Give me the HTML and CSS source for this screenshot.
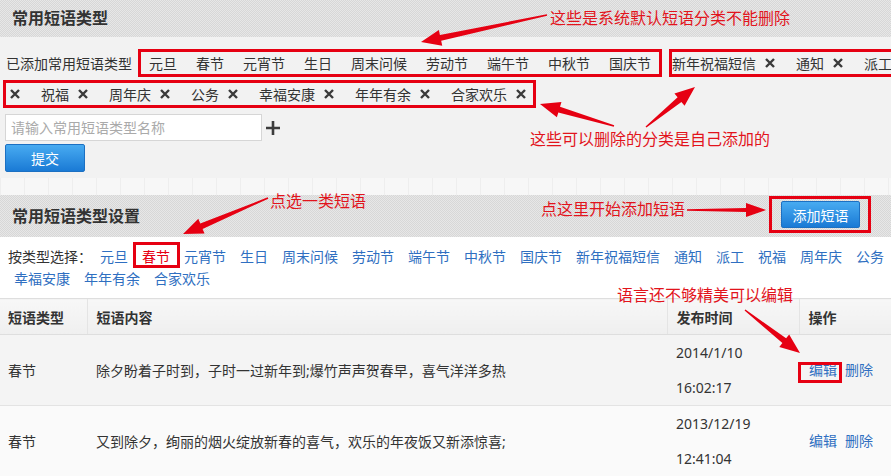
FILE: index.html
```html
<!DOCTYPE html>
<html lang="zh-CN">
<head>
    <meta charset="UTF-8">
    <meta name="viewport" content="width=device-width, initial-scale=1.0">
    <title>常用短语类型</title>
    <link rel="stylesheet" href="styles.css">
</head>
<body>
<div class="page">
    <!-- 常用短语类型 -->
    <div class="bar">
        <h2>常用短语类型</h2>
    </div>
    <div class="panel-body">
        <div class="tag-row">
            <span class="tag-label">已添加常用短语类型</span>
            <span class="tag-group system">
                <span>元旦</span>
                <span>春节</span>
                <span>元宵节</span>
                <span>生日</span>
                <span>周末问候</span>
                <span>劳动节</span>
                <span>端午节</span>
                <span>中秋节</span>
                <span>国庆节</span>
            </span>
            <span class="tag-group own first-line">
                <span class="tag">新年祝福短信<svg class="del" viewBox="0 0 10 10"><path d="M1 1L9 9M9 1L1 9"/></svg></span>
                <span class="tag">通知<svg class="del" viewBox="0 0 10 10"><path d="M1 1L9 9M9 1L1 9"/></svg></span>
                <span class="tag">派工</span>
            </span>
        </div>
        <div class="tag-row">
            <span class="tag-group own second-line">
                <span class="tag"><svg class="del" viewBox="0 0 10 10"><path d="M1 1L9 9M9 1L1 9"/></svg></span>
                <span class="tag">祝福<svg class="del" viewBox="0 0 10 10"><path d="M1 1L9 9M9 1L1 9"/></svg></span>
                <span class="tag">周年庆<svg class="del" viewBox="0 0 10 10"><path d="M1 1L9 9M9 1L1 9"/></svg></span>
                <span class="tag">公务<svg class="del" viewBox="0 0 10 10"><path d="M1 1L9 9M9 1L1 9"/></svg></span>
                <span class="tag">幸福安康<svg class="del" viewBox="0 0 10 10"><path d="M1 1L9 9M9 1L1 9"/></svg></span>
                <span class="tag">年年有余<svg class="del" viewBox="0 0 10 10"><path d="M1 1L9 9M9 1L1 9"/></svg></span>
                <span class="tag">合家欢乐<svg class="del" viewBox="0 0 10 10"><path d="M1 1L9 9M9 1L1 9"/></svg></span>
            </span>
        </div>
        <div class="add-row">
            <input type="text" placeholder="请输入常用短语类型名称">
            <svg class="plus" viewBox="0 0 14 14"><path d="M7 0V14M0 7H14"/></svg>
        </div>
        <button class="btn submit">提交</button>
    </div>

    <div class="band"></div>

    <!-- 常用短语类型设置 -->
    <div class="bar tall">
        <h2>常用短语类型设置</h2>
        <span class="btn-mark"><button class="btn add">添加短语</button></span>
    </div>
    <div class="filter">
        <span class="filter-label">按类型选择：</span>
        <a href="#">元旦</a>
        <a href="#" class="active">春节</a>
        <a href="#">元宵节</a>
        <a href="#">生日</a>
        <a href="#">周末问候</a>
        <a href="#">劳动节</a>
        <a href="#">端午节</a>
        <a href="#">中秋节</a>
        <a href="#">国庆节</a>
        <a href="#">新年祝福短信</a>
        <a href="#">通知</a>
        <a href="#">派工</a>
        <a href="#">祝福</a>
        <a href="#">周年庆</a>
        <a href="#">公务</a>
        <a href="#">幸福安康</a>
        <a href="#">年年有余</a>
        <a href="#">合家欢乐</a>
    </div>

    <table>
        <colgroup>
            <col style="width:87px">
            <col style="width:580px">
            <col style="width:132px">
            <col style="width:92px">
        </colgroup>
        <tr>
            <th>短语类型</th>
            <th>短语内容</th>
            <th>发布时间</th>
            <th>操作</th>
        </tr>
        <tr>
            <td>春节</td>
            <td>除夕盼着子时到，子时一过新年到;爆竹声声贺春早，喜气洋洋多热</td>
            <td class="time">2014/1/10<br>16:02:17</td>
            <td><div class="actions"><a href="#" class="marked">编辑</a><a href="#">删除</a></div></td>
        </tr>
        <tr>
            <td>春节</td>
            <td>又到除夕，绚丽的烟火绽放新春的喜气，欢乐的年夜饭又新添惊喜;</td>
            <td class="time">2013/12/19<br>12:41:04</td>
            <td><div class="actions"><a href="#">编辑</a><a href="#">删除</a></div></td>
        </tr>
    </table>

    <!-- annotations drawn over the screenshot -->
    <svg class="arrows" viewBox="0 0 891 476">
        <polygon points="546.85,14.32 439.92,34.88 438.87,29.99 421,42 442.23,45.63 441.18,40.74 547.15,15.68"/>
        <polygon points="614.2,125.33 560.03,106.82 561.45,102.03 540,104 556.89,117.37 558.32,112.58 613.8,126.67"/>
        <polygon points="646.44,127.54 681.41,101.97 684.57,105.85 695,87 674.45,93.45 677.61,97.33 645.56,126.46"/>
        <polygon points="267.73,197.36 200.25,223.44 198.3,218.83 183,234 204.54,233.57 202.59,228.96 268.27,198.64"/>
        <polygon points="687,209.3 746,208 746,203 766,210 746,217 746,212 687,210.7"/>
        <polygon points="744.57,310.55 782.39,343.04 779.31,346.98 800,353 789.17,334.38 786.09,338.32 745.43,309.45"/>
    </svg>
    <span class="note n1">这些是系统默认短语分类不能删除</span>
    <span class="note n2">这些可以删除的分类是自己添加的</span>
    <span class="note n3">点选一类短语</span>
    <span class="note n4">点这里开始添加短语</span>
    <span class="note n5">语言还不够精美可以编辑</span>
</div>
</body>
</html>
```

FILE: styles.css
```css
* {
    box-sizing: border-box;
}
body {
    margin: 0;
    font-family: "Noto Sans", "Noto Sans CJK SC", sans-serif;
    font-size: 14px;
    color: #333;
    background-color: #fff;
}
.page {
    position: relative;
    width: 891px;
    height: 476px;
    overflow: hidden;
}

/* grey dotted title bars */
.bar {
    height: 37px;
    display: flex;
    align-items: center;
    justify-content: space-between;
    padding: 0 20px 0 12px;
    background: #dfdfdf repeating-conic-gradient(#d7d7d7 0 25%, #e7e7e7 0 50%) 0 0 / 2px 2px;
}
.bar.tall {
    height: 42px;
    align-items: flex-start;
}
.bar h2 {
    margin: 0;
    font-size: 16px;
    font-weight: bold;
    color: #333;
    line-height: 37px;
}
.bar.tall h2 {
    line-height: 42px;
}

.panel-body {
    height: 141px;
    padding: 12px 0 6px;
    background-color: #f2f2f2;
}
.tag-row {
    display: flex;
    align-items: center;
    height: 28px;
    white-space: nowrap;
}
.tag-row + .tag-row {
    margin-top: 3px;
}
.tag-label {
    margin: 0 6px;
}
.tag-group {
    display: flex;
    align-items: center;
    flex-shrink: 0;
    height: 28px;
    border: 3px solid #e60012;
}
.system {
    padding: 0 8px;
    gap: 19px;
}
.own.first-line {
    margin-left: 7px;
}
.own.second-line {
    margin-left: 3px;
    padding: 0 7px 0 4px;
}
.tag {
    display: flex;
    align-items: center;
    gap: 9px;
    margin-right: 21px;
}
.tag:last-child {
    margin-right: 0;
}
.del {
    width: 10px;
    height: 10px;
}
.del path {
    stroke: #3a3a3a;
    stroke-width: 2.4;
    fill: none;
}

.add-row {
    display: flex;
    align-items: center;
    margin-top: 6px;
    height: 27px;
}
.add-row input {
    width: 257px;
    height: 27px;
    margin-left: 5px;
    padding: 0 5px;
    border: 1px solid #d6d6d6;
    background-color: #fff;
    font-family: inherit;
    font-size: 14px;
    color: #333;
    outline: none;
}
.add-row input::placeholder {
    color: #aaa;
}
.plus {
    width: 14px;
    height: 14px;
    margin-left: 4px;
}
.plus path {
    stroke: #3c3c3c;
    stroke-width: 2.6;
}

.btn {
    display: block;
    height: 28px;
    padding: 0;
    border: 1px solid #1c70c2;
    border-radius: 2px;
    background: linear-gradient(#48abf1, #1a7ad5);
    color: #fff;
    font-family: inherit;
    font-size: 14px;
}
.submit {
    width: 80px;
    margin: 3px 0 0 5px;
}
.btn-mark {
    margin-top: 1px;
    padding: 2px 8px 2px 9px;
    border: 3px solid #e60012;
}
.add {
    width: 79px;
    height: 27px;
}

.band {
    height: 17px;
    background: #f7f7f7 repeating-linear-gradient(90deg, #eeeeee 0 1px, transparent 1px 24px);
}

/* filter by type */
.filter {
    display: flex;
    flex-wrap: wrap;
    column-gap: 2px;
    padding: 9px 0 8px 8px;
    line-height: 22px;
    background-color: #fff;
}
.filter a {
    padding: 0 6px;
    color: #2f6fc1;
    text-decoration: none;
}
.filter a.active {
    position: relative;
    color: #e60012;
}
.filter a.active::after {
    content: "";
    position: absolute;
    top: -4px;
    right: -4px;
    bottom: 0;
    left: -3px;
    border: 3px solid #e60012;
}

table {
    width: 891px;
    border-collapse: collapse;
    table-layout: fixed;
}
th {
    height: 36px;
    padding: 0 9px;
    text-align: left;
    font-weight: bold;
    color: #333;
    background: linear-gradient(#f7f7f7, #efefef);
    border-top: 1px solid #dedede;
    border-bottom: 1px solid #dedede;
    border-left: 1px solid #e4e4e4;
}
th:first-child, td:first-child {
    padding-left: 8px;
    border-left: none;
}
td {
    height: 71px;
    padding: 0 9px;
    border-bottom: 1px solid #e3e3e3;
}
tr:nth-child(2) td {
    background-color: #f4f4f4;
}
tr:nth-child(3) td {
    background-color: #fafafa;
}
td.time {
    line-height: 35px;
}
.actions {
    display: flex;
    gap: 8px;
    padding-left: 1px;
}
.actions a {
    position: relative;
    line-height: 20px;
    color: #2f6fc1;
    text-decoration: none;
}
.actions a.marked::after {
    content: "";
    position: absolute;
    top: 2px;
    right: -5px;
    bottom: -3px;
    left: -11px;
    border: 3px solid #e60012;
}

/* red notes */
.arrows {
    position: absolute;
    top: 0;
    left: 0;
    width: 891px;
    height: 476px;
    pointer-events: none;
}
.arrows polygon {
    fill: #e60012;
}
.note {
    position: absolute;
    font-size: 16px;
    line-height: 20px;
    color: #e2141c;
    white-space: nowrap;
}
.n1 { left: 550px; top: 8px; }
.n2 { left: 530px; top: 129px; }
.n3 { left: 270px; top: 191px; }
.n4 { left: 541px; top: 199px; }
.n5 { left: 617px; top: 285px; }
```
